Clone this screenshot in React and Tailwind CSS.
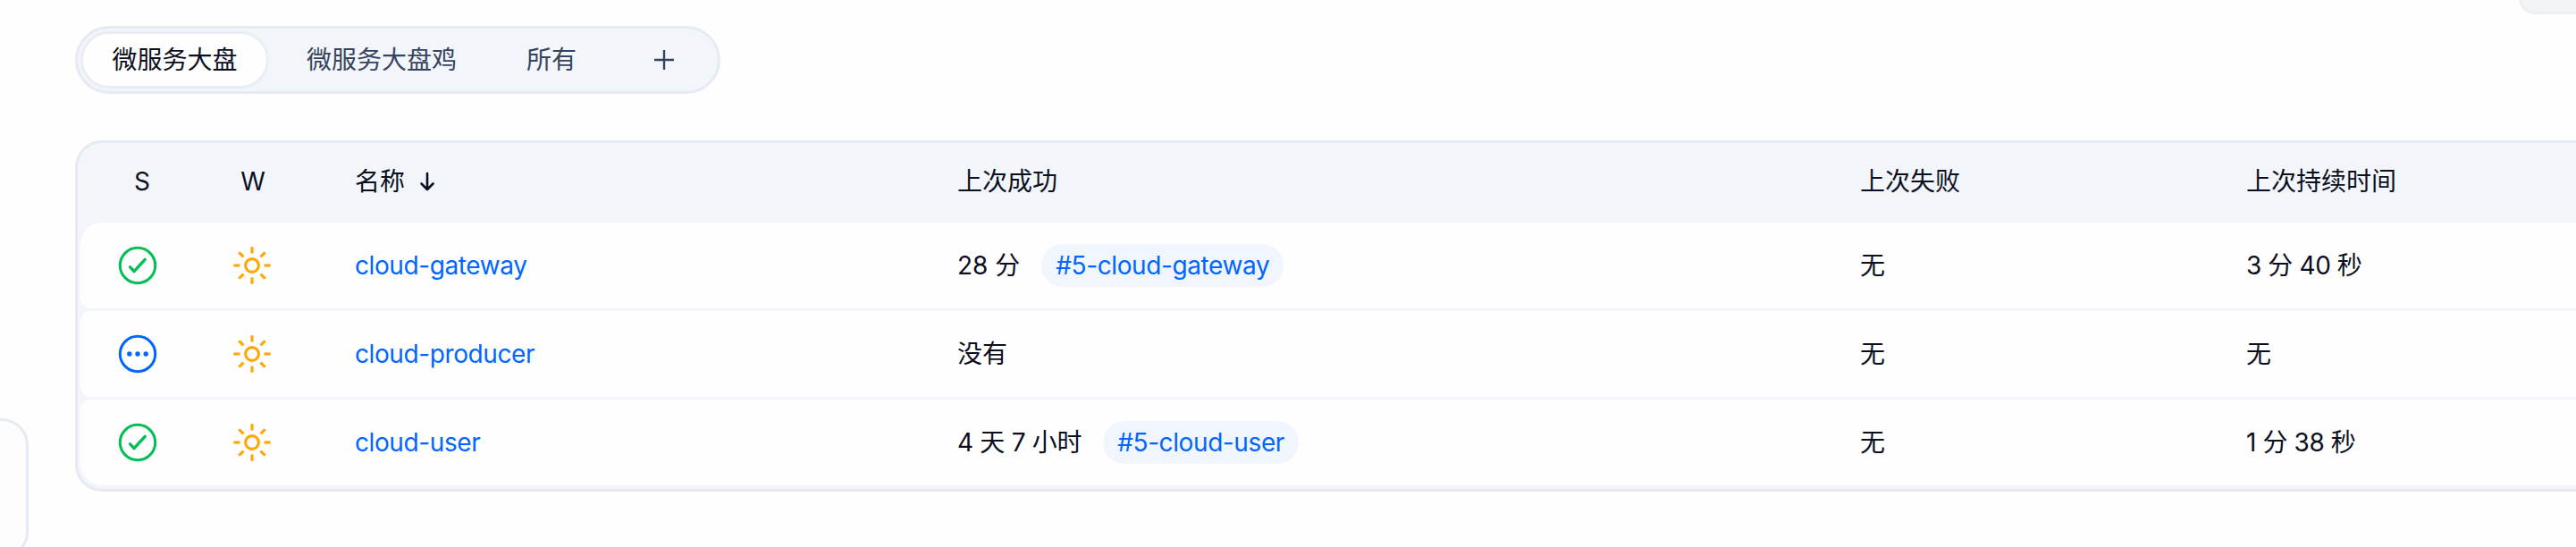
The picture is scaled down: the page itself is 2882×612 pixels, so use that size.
import React from "react";

const ff = "font-['Inter','Noto_Sans_CJK_SC',sans-serif]";
const cols = "grid grid-cols-[128px_128px_725px_1010px_432px_500px] items-center";

function Sun() {
  const rays = [0, 45, 90, 135, 180, 225, 270, 315];
  return (
    <svg width="44" height="44" viewBox="0 0 44 44" fill="none" stroke="#ffa600" strokeWidth="3.1">
      <circle cx="22" cy="22" r="7.4" />
      {rays.map((a) => (
        <line key={a} x1="22" y1="8.5" x2="22" y2="1.3" transform={`rotate(${a} 22 22)`} />
      ))}
    </svg>
  );
}

function Check() {
  return (
    <svg width="44" height="44" viewBox="0 0 44 44" fill="none" stroke="#00c054">
      <circle cx="22" cy="22" r="19.7" strokeWidth="3" />
      <path d="M13.6 23.8 L18 28.6 L30.2 15.4" strokeWidth="3.4" strokeLinecap="round" strokeLinejoin="round" />
    </svg>
  );
}

function Running() {
  return (
    <svg width="44" height="44" viewBox="0 0 44 44" fill="none">
      <circle cx="22" cy="22" r="19.7" stroke="#0066ff" strokeWidth="3" />
      <circle cx="12.8" cy="22" r="2.7" fill="#0066ff" />
      <circle cx="22" cy="22" r="2.7" fill="#0066ff" />
      <circle cx="31.2" cy="22" r="2.7" fill="#0066ff" />
    </svg>
  );
}

function Row({ icon, name, last, lastClass = "", badge, fail, dur, className }) {
  return (
    <div className={`${cols} bg-[#fefefe] h-[96px] ${className}`}>
      <div className="flex justify-center">{icon}</div>
      <div className="flex justify-center"><Sun /></div>
      <div className="pl-[51px] text-[#0066ff] tracking-[-0.4px]">{name}</div>
      <div className="flex items-center gap-6">
        <span className={lastClass}>{last}</span>
        {badge && (
          <span className="h-12 px-4 rounded-3xl bg-[#f1f6fe] text-[#0066ff] flex items-center tracking-[-0.4px]">{badge}</span>
        )}
      </div>
      <div>{fail}</div>
      <div className="tracking-[-0.4px]">{dur}</div>
    </div>
  );
}

export default function App() {
  return (
    <div className={`${ff} relative h-[612px] overflow-hidden bg-[#fefefe] text-[28px] text-[#0c0f1e] pl-[84px] pt-[29px]`}>
      <div className="absolute left-[-40px] top-[468px] w-[72px] h-[157px] rounded-[30px] border-[3px] border-[#e6ebf3] bg-[#fdfdfe]" />
      <div className="absolute left-[2818px] top-[-40px] w-[100px] h-[56px] rounded-[18px] border-[3px] border-[#eeeff3] bg-[#f3f4f8]" />

      <div className="inline-flex items-center gap-[6px] h-[76px] p-[3px] rounded-[38px] border-[3px] border-[#e6ebf3] bg-[#f2f5f9] text-[#38445e]">
        <div className="h-16 w-[211px] flex items-center justify-center rounded-[32px] border-[3px] border-[#e9edf4] bg-[#fefefe] text-[#0c0f1e]">微服务大盘</div>
        <div className="h-16 px-9 flex items-center rounded-[32px]">微服务大盘鸡</div>
        <div className="h-16 px-9 flex items-center rounded-[32px]">所有</div>
        <div className="h-16 w-[113px] pr-[2px] flex items-center justify-center rounded-[32px]">
          <svg width="24" height="24" viewBox="0 0 24 24" fill="none" stroke="#36425c" strokeWidth="2.4">
            <path d="M12 1 V23 M1 12 H23" />
          </svg>
        </div>
      </div>

      <div className="mt-[52px] w-[2860px] rounded-tl-[30px] rounded-bl-[30px] border-[3px] border-[#e6ebf3] bg-[#f2f5f9]">
        <div className={`${cols} h-[89px] pl-[3px] pb-[3px]`}>
          <div className="text-center pl-[10px]">S</div>
          <div className="text-center pl-[2px]">W</div>
          <div className="pl-[51px] flex items-center gap-4">
            <span>名称</span>
            <svg width="18" height="22" viewBox="0 0 18 22" fill="none" stroke="#0c0f1e" strokeWidth="2.6" strokeLinecap="round" strokeLinejoin="round">
              <path d="M9 2 V20 M2.5 13.5 L9 20 L15.5 13.5" />
            </svg>
          </div>
          <div>上次成功</div>
          <div>上次失败</div>
          <div>上次持续时间</div>
        </div>
        <div className="pl-[3px] pb-1 flex flex-col gap-[3px]">
          <Row className="rounded-tl-[24px] rounded-bl-[12px]" icon={<Check />} name="cloud-gateway" last="28 分" badge="#5-cloud-gateway" fail="无" dur="3 分 40 秒" />
          <Row className="rounded-l-[12px]" icon={<Running />} name="cloud-producer" last="没有" fail="无" dur="无" />
          <Row className="rounded-tl-[12px] rounded-bl-[24px]" icon={<Check />} name="cloud-user" last="4 天 7 小时" lastClass="tracking-[-0.3px]" badge="#5-cloud-user" fail="无" dur="1 分 38 秒" />
        </div>
      </div>
    </div>
  );
}
